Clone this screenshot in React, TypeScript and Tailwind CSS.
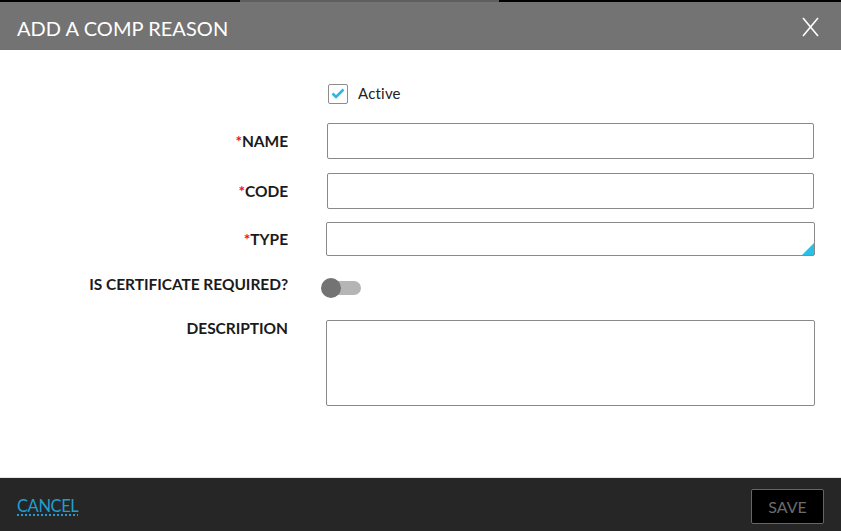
const Asterisk = () => <span className="text-[#f0141b]">*</span>

const Label = ({ children, req, className = "" }: { children: React.ReactNode; req?: boolean; className?: string }) => (
  <div className={`w-[288px] shrink-0 text-right text-[15.5px] leading-[20px] font-bold text-[#1b1b1b] uppercase tracking-[-0.05px] ${className}`}>
    {req && <Asterisk />}
    {children}
  </div>
)

export default function App() {
  return (
    <div className="w-[841px] h-[531px] flex flex-col bg-white font-['Lato','Noto_Sans',sans-serif] overflow-hidden">
      {/* top edge */}
      <div className="flex h-[2px] shrink-0">
        <div className="w-[240px] bg-black"></div>
        <div className="w-[259px] bg-[#5e5e5e]"></div>
        <div className="flex-1 bg-black"></div>
      </div>
      <header className="h-[48px] shrink-0 bg-[#737373] flex items-center justify-between pl-[17px] pr-[22px]">
        <h1 className="text-white text-[20px] font-normal tracking-[0.05px] mt-[4px]">ADD A COMP REASON</h1>
        <button className="text-white mt-[2px]">
          <svg width="17" height="20" viewBox="0 0 17 20" fill="none" stroke="white" strokeWidth="1.6">
            <path d="M1 1 L16 19 M16 1 L1 19" />
          </svg>
        </button>
      </header>

      <main className="flex-1 flex flex-col pt-[34px]">
        <div className="flex items-center h-[19px]">
          <div className="w-[288px] shrink-0"></div>
          <label className="ml-[40px] flex items-center gap-[10px]">
            <span className="w-[20px] h-[20px] border border-[#8d8d8d] rounded-[2px] flex items-center justify-center">
              <svg width="14" height="11" viewBox="0 0 14 11" fill="none" stroke="#2bb7e2" strokeWidth="2.6">
                <path d="M1.5 5.5 L5 9 L12.5 1.5" />
              </svg>
            </span>
            <span className="text-[15px] text-[#222] tracking-[0.2px]">Active</span>
          </label>
        </div>

        <div className="flex items-center mt-[20px]">
          <Label req>Name</Label>
          <input className="ml-[39px] w-[487px] h-[36px] border border-[#8a8a8a] rounded-[2px] outline-none px-2" />
        </div>

        <div className="flex items-center mt-[14px]">
          <Label req>Code</Label>
          <input className="ml-[39px] w-[487px] h-[36px] border border-[#8a8a8a] rounded-[2px] outline-none px-2" />
        </div>

        <div className="flex items-center mt-[13px]">
          <Label req>Type</Label>
          <div className="relative ml-[38px] w-[489px] h-[34px] border border-[#8a8a8a] rounded-[2px]">
            <div className="absolute right-0 bottom-0 w-0 h-0 border-l-[12px] border-l-transparent border-b-[12px] border-b-[#29c0e8]"></div>
          </div>
        </div>

        <div className="flex items-center mt-[22px] h-[20px]">
          <Label className="relative -top-[4px]">Is certificate required?</Label>
          <div className="relative ml-[33px] w-[40px] h-[20px] flex items-center">
            <div className="absolute left-[9px] right-0 h-[14px] rounded-full bg-[#b5b5b5]"></div>
            <div className="relative w-[20px] h-[20px] rounded-full bg-[#737373]"></div>
          </div>
        </div>

        <div className="flex items-start mt-[22px]">
          <Label className="-mt-[2px]">Description</Label>
          <textarea className="ml-[38px] w-[489px] h-[86px] border border-[#8a8a8a] rounded-[2px] outline-none resize-none p-2" />
        </div>
      </main>

      <footer className="h-[54px] shrink-0 bg-[#262626] border-t border-[#e6e6e6] flex items-center justify-between pl-[17px] pr-[17px]">
        <a href="#" className="text-[16.5px] text-[#1e9fcf] underline decoration-dotted decoration-2 underline-offset-[3px] tracking-[-0.4px] mt-[3px]">
          CANCEL
        </a>
        <button className="w-[73px] h-[35px] bg-black border border-[#666] rounded-[2px] text-[16px] text-[#6b6b6b] mt-[4px]">
          SAVE
        </button>
      </footer>
    </div>
  )
}
